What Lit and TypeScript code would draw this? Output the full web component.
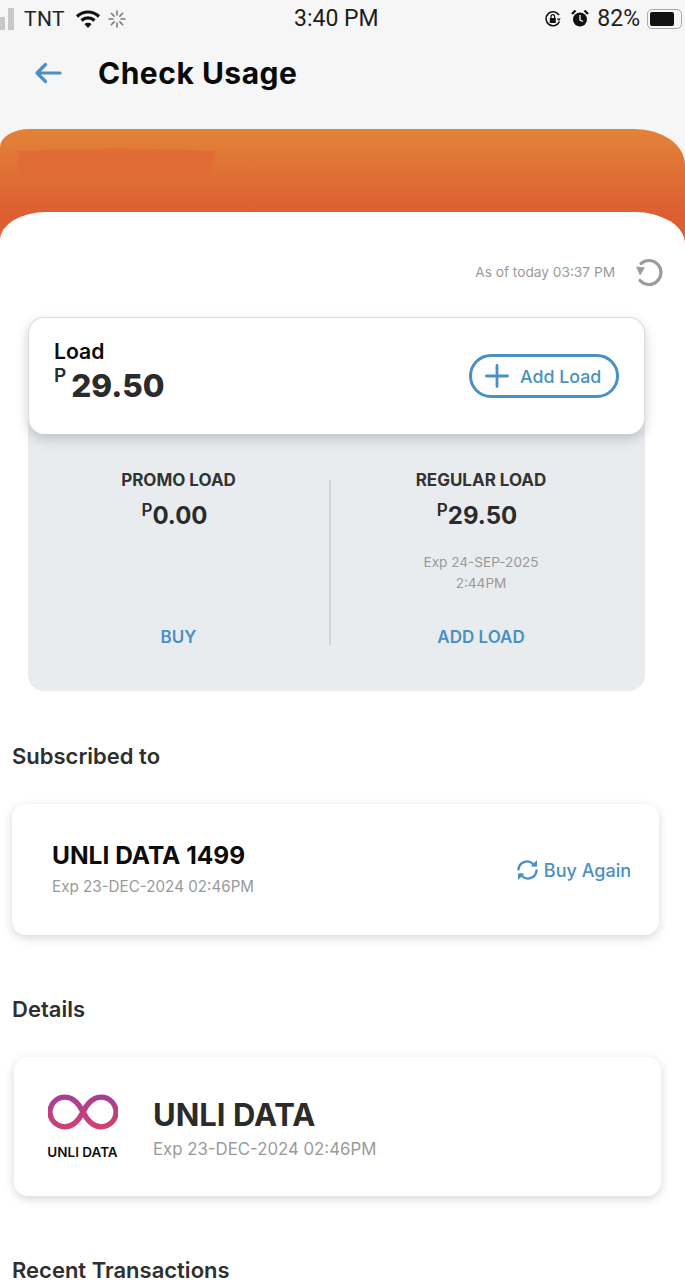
import {LitElement, html, css} from 'lit';
import {customElement} from 'lit/decorators.js';

@customElement('app-root')
export class AppRoot extends LitElement {
  static styles = css`
    :host {
      --blue: #4a90c2;
      display: block;
      width: 685px;
      height: 1280px;
      overflow: hidden;
      background: #f6f6f6;
      font-family: Inter, 'Open Sans', sans-serif;
      color: #2b2b2b;
    }
    .status {
      height: 37px;
      display: grid;
      grid-template-columns: 294px auto 1fr;
      align-items: center;
      font-family: Roboto, sans-serif;
      font-size: 21px;
      color: #222;
    }
    .status-left {
      display: flex;
      align-items: center;
    }
    .signal {
      display: flex;
      align-items: flex-end;
      gap: 3px;
      width: 25px;
      height: 22px;
      margin-left: -1px;
    }
    .signal i {
      display: block;
      width: 6px;
      background: #c8c8c8;
    }
    .carrier {
      margin-right: 10px;
      letter-spacing: 0.4px;
    }
    .time {
      font-size: 23px;
      color: #1c1c1c;
    }
    .status-right {
      display: flex;
      align-items: center;
      justify-content: flex-end;
      padding-right: 3px;
    }
    .pct {
      margin: 0 7px 0 8px;
      font-size: 23px;
    }
    .battery {
      width: 35px;
      height: 20px;
      box-sizing: border-box;
      border: 1.5px solid #aaa;
      border-radius: 5px;
      padding: 2px;
    }
    .battery i {
      display: block;
      width: 82%;
      height: 100%;
      background: #111;
      border-radius: 2px;
    }
    .header {
      height: 92px;
      display: flex;
      align-items: center;
      padding: 0 0 20px 34px;
      box-sizing: border-box;
    }
    .header h1 {
      margin: 0 0 0 36px;
      font-size: 30px;
      font-weight: 700;
      color: #0a0a0a;
      letter-spacing: 0.5px;
    }
    .hero {
      height: 132px;
      background: linear-gradient(#e28339, #dd5f31 64%);
      border-radius: 30px 50px 0 0 / 18px 36px 0 0;
      position: relative;
    }
    .smudge {
      position: absolute;
      left: 17px;
      top: 19px;
      width: 200px;
      height: 34px;
      background: linear-gradient(#e16b36 50%, rgba(225, 107, 54, 0));
      filter: blur(2px);
      clip-path: polygon(0 8%, 50% 0, 100% 8%, 94% 100%, 0 100%);
    }
    .sheet {
      margin-top: -49px;
      height: 1068px;
      background: #fff;
      border-radius: 46px 50px 0 0 / 28px 32px 0 0;
      position: relative;
    }
    .asof {
      display: flex;
      justify-content: flex-end;
      align-items: center;
      height: 105px;
      box-sizing: border-box;
      padding: 15px 21px 0 0;
      gap: 19px;
      font-size: 13.7px;
      color: #9a9a9a;
    }
    .balance {
      margin-left: 28px;
      width: 617px;
      height: 374px;
      background: #e9ecef;
      border-radius: 16px;
    }
    .load {
      height: 117px;
      box-sizing: border-box;
      background: #fff;
      border: 1.5px solid #dcdcdc;
      border-bottom: none;
      border-radius: 16px;
      box-shadow: 0 5px 12px rgba(60, 70, 80, 0.25);
      padding: 20px 25px 0 25px;
      display: flex;
      justify-content: space-between;
    }
    .load-label {
      font-size: 21.2px;
      font-weight: 600;
      color: #0a0a0a;
      line-height: 26px;
    }
    .load-amount {
      display: flex;
      font-size: 31.5px;
      font-weight: 800;
      line-height: 44px;
    }
    .load-amount sup {
      font-size: 19px;
      font-weight: 600;
      line-height: 24px;
      margin-right: 5px;
    }
    .add {
      margin-top: 16px;
      width: 150px;
      height: 44px;
      box-sizing: border-box;
      border: 3px solid var(--blue);
      border-radius: 22px;
      display: flex;
      align-items: center;
      gap: 11px;
      padding-left: 13px;
      font-size: 17.8px;
      font-weight: 500;
      color: var(--blue);
    }
    .split {
      display: grid;
      grid-template-columns: 301px 2px 1fr;
      padding-top: 34px;
    }
    .col {
      display: flex;
      flex-direction: column;
      align-items: center;
      height: 181px;
    }
    .col.right {
      padding-right: 14px;
    }
    .col h3 {
      margin: 0;
      font-size: 17px;
      font-weight: 700;
      line-height: 24px;
      color: #333;
    }
    .rule {
      background: #cfd3d6;
      height: 165px;
      margin-top: 12px;
    }
    .amount {
      display: flex;
      margin: 8px 8px 0 0;
      font-size: 24px;
      font-weight: 700;
      line-height: 32px;
    }
    .amount sup {
      font-size: 17px;
      font-weight: 600;
      line-height: 20px;
    }
    .exp {
      margin-top: 20px;
      font-size: 13.6px;
      line-height: 21px;
      color: #999;
      text-align: center;
    }
    .action {
      margin-top: auto;
      font-size: 17px;
      font-weight: 600;
      color: var(--blue);
      line-height: 24px;
    }
    h2 {
      margin: 0;
      font-size: 22px;
      font-weight: 600;
      line-height: 28px;
      color: #2f2f2f;
      padding-left: 12px;
    }
    .sub-title {
      margin-top: 51px;
    }
    .card {
      background: #fff;
      border-radius: 14px;
      box-shadow: 0 3px 10px rgba(60, 60, 60, 0.2);
      display: flex;
      align-items: center;
    }
    .sub-card {
      margin: 34px 26px 0 12px;
      height: 131px;
      box-sizing: border-box;
      padding: 3px 28px 0 40px;
      justify-content: space-between;
    }
    .name {
      font-size: 24.5px;
      font-weight: 700;
      color: #0c0c0c;
      line-height: 32px;
    }
    .sub-exp {
      font-size: 15.2px;
      color: #9a9a9a;
      line-height: 32px;
    }
    .again {
      display: flex;
      align-items: center;
      gap: 5px;
      margin-top: -2px;
      font-size: 18px;
      font-weight: 500;
      color: var(--blue);
    }
    .details-title {
      margin-top: 60px;
    }
    .detail-card {
      margin: 34px 24px 0 14px;
      height: 139px;
      box-sizing: border-box;
      padding: 8px 0 0 33px;
      gap: 35px;
    }
    .logo {
      display: flex;
      flex-direction: column;
      align-items: center;
      width: 71px;
      gap: 12px;
      margin-top: -5px;
      font-size: 13.5px;
      font-weight: 600;
      line-height: 20px;
      color: #111;
      white-space: nowrap;
    }
    .detail-name {
      font-size: 31px;
      font-weight: 700;
      line-height: 36px;
    }
    .detail-exp {
      font-size: 16.8px;
      color: #9a9a9a;
      line-height: 32px;
    }
    .recent-title {
      margin-top: 64px;
      line-height: 20px;
    }
  `;

  render() {
    return html`
      <div class="status">
        <div class="status-left">
          <div class="signal"><i style="height:13px"></i><i style="height:22px"></i></div>
          <span class="carrier">TNT</span>
          <svg width="26" height="20" viewBox="0 0 26 20" fill="none" stroke="#111" stroke-width="3.2">
            <path d="M2 7.5c6.5-6 15.5-6 22 0" />
            <path d="M6.5 11.5c3.8-3.5 9.2-3.5 13 0" />
            <path d="M13 19l-3.600-4c2.100-1.800 5.100-1.800 7.200 0z" fill="#111" stroke="none" />
          </svg>
          <svg style="margin-left:7px" width="18" height="18" viewBox="0 0 18 18" stroke="#777" stroke-width="1.5" stroke-linecap="round">
            <path d="M9 1v4M9 13v4M1 9h4M13 9h4M3.3 3.3l2.8 2.8M11.9 11.9l2.8 2.8M3.3 14.7l2.8-2.8M11.9 6.1l2.8-2.8" />
          </svg>
        </div>
        <div class="time">3:40 PM</div>
        <div class="status-right">
          <svg width="18" height="18" viewBox="0 0 18 18" fill="none" stroke="#111" stroke-width="1.6">
            <path d="M15.5 11.5A7 7 0 1 1 15 5" />
            <path d="M16.8 8.5l-2 2.6-2-2.6z" fill="#111" stroke="none" />
            <rect x="5.8" y="8" width="6" height="5" fill="#111" stroke="none" />
            <path d="M7 8V6.5a1.8 1.8 0 0 1 3.6 0V8" stroke-width="1.2" />
          </svg>
          <svg style="margin-left:9px" width="18" height="19" viewBox="0 0 18 19">
            <circle cx="9" cy="10.5" r="7" fill="#111" />
            <path d="M9 6v5l3 1.5" stroke="#fff" stroke-width="1.3" fill="none" />
            <path d="M1 5l3.5-3.5M17 5l-3.5-3.5" stroke="#111" stroke-width="2.4" />
          </svg>
          <span class="pct">82%</span>
          <div class="battery"><i></i></div>
        </div>
      </div>

      <div class="header">
        <svg width="28" height="24" viewBox="0 0 28 24" fill="none" stroke="#4a90c2" stroke-width="3.2" stroke-linecap="round" stroke-linejoin="round">
          <path d="M26 12H3M11.5 3.5L3 12l8.5 8.5" />
        </svg>
        <h1>Check Usage</h1>
      </div>

      <div class="hero"><div class="smudge"></div></div>

      <div class="sheet">
        <div class="asof">
          <span>As of today 03:37 PM</span>
          <svg width="30" height="30" viewBox="0 0 30 30" fill="none" stroke="#9c9c9c" stroke-width="3.2" stroke-linecap="round">
            <path d="M7 6.500a12 12 0 1 1-1 17" />
            <path d="M2 9.5l9 1-5 8z" fill="#9c9c9c" stroke="none" />
          </svg>
        </div>

        <div class="balance">
          <div class="load">
            <div>
              <div class="load-label">Load</div>
              <div class="load-amount"><sup>P</sup>29.50</div>
            </div>
            <div class="add">
              <svg width="24" height="24" viewBox="0 0 24 24" stroke="#4a90c2" stroke-width="2.8" stroke-linecap="round">
                <path d="M12 1.5v21M1.5 12h21" />
              </svg>
              Add Load
            </div>
          </div>
          <div class="split">
            <div class="col">
              <h3>PROMO LOAD</h3>
              <div class="amount"><sup>P</sup>0.00</div>
              <div class="action">BUY</div>
            </div>
            <div class="rule"></div>
            <div class="col right">
              <h3>REGULAR LOAD</h3>
              <div class="amount"><sup>P</sup>29.50</div>
              <div class="exp">Exp 24-SEP-2025<br />2:44PM</div>
              <div class="action">ADD LOAD</div>
            </div>
          </div>
        </div>

        <h2 class="sub-title">Subscribed to</h2>
        <div class="card sub-card">
          <div>
            <div class="name">UNLI DATA 1499</div>
            <div class="sub-exp">Exp 23-DEC-2024 02:46PM</div>
          </div>
          <div class="again">
            <svg width="23" height="22" viewBox="0 0 23 22" fill="none" stroke="#4a90c2" stroke-width="2.4" stroke-linecap="round">
              <path d="M2.5 10.5A8.5 8.5 0 0 1 17 5l1.5 1.5" />
              <path d="M20.5 11.5A8.5 8.5 0 0 1 6 17l-1.500-1.500" />
              <path d="M21 1v6.500h-6.500zM2 21v-6.500h6.500z" fill="#4a90c2" stroke="none" />
            </svg>
            Buy Again
          </div>
        </div>

        <h2 class="details-title">Details</h2>
        <div class="card detail-card">
          <div class="logo">
            <svg width="70" height="36" viewBox="0 0 71 36" fill="none" stroke="url(#inf)" stroke-width="5.4">
              <defs>
                <linearGradient id="inf" gradientUnits="userSpaceOnUse" x1="0" y1="0" x2="0" y2="36">
                  <stop offset="0" stop-color="#a53f95" />
                  <stop offset="1" stop-color="#d2416f" />
                </linearGradient>
              </defs>
              <path d="M35.5 18C31 9 25 3 17 3A15 15 0 0 0 17 33C25 33 31 27 35.5 18C40 9 46 3 54 3A15 15 0 0 1 54 33C46 33 40 27 35.5 18Z" />
            </svg>
            UNLI DATA
          </div>
          <div>
            <div class="detail-name">UNLI DATA</div>
            <div class="detail-exp">Exp 23-DEC-2024 02:46PM</div>
          </div>
        </div>

        <h2 class="recent-title">Recent Transactions</h2>
      </div>
    `;
  }
}
